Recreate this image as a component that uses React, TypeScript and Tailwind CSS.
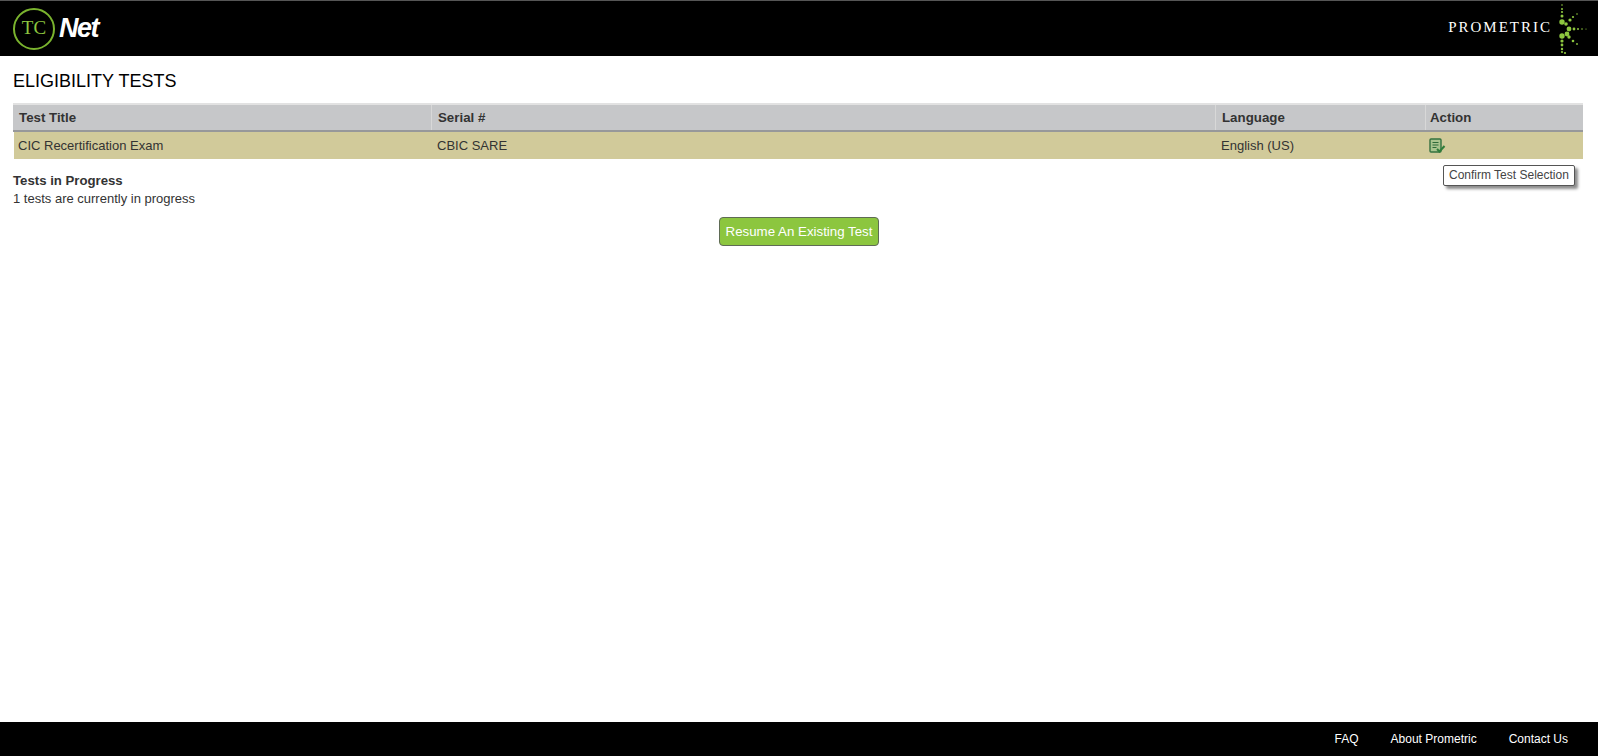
import React from 'react';

const SANS = { fontFamily: '"Liberation Sans", Arial, sans-serif' };

const columns = [
  { label: 'Test Title', value: 'CIC Recertification Exam', width: 'w-[419px]' },
  { label: 'Serial #', value: 'CBIC SARE', width: 'w-[784px]' },
  { label: 'Language', value: 'English (US)', width: 'w-[210px]' },
];

// dots read off the logo, origin at the left edge of the starburst
const dots: [number, number, number][] = [
  [12, 3, 0.8], [12, 7, 1], [12, 10, 1.1], [12, 14, 1.5],
  [12, 20, 2.7], [16, 22, 1.8], [20, 18, 1.6], [23, 15, 1.1], [27, 12, 0.8],
  [19, 27, 2.4], [24, 27, 1.4], [28, 27, 1], [32, 27, 0.8], [36, 27, 0.6],
  [17, 32, 2.4], [12, 34, 2.7], [19, 35, 1.7], [23, 39, 1.3], [27, 42, 0.9],
  [12, 39, 1.6], [12, 43, 1.4], [12, 47, 1.2], [12, 50, 1.1], [15, 51, 1.1],
];

const Starburst = () => (
  <svg width="48" height="54" viewBox="0 0 48 54" className="block">
    {dots.map(([cx, cy, r], i) => (
      <circle key={i} cx={cx} cy={cy} r={r} fill="#8dc63f" />
    ))}
  </svg>
);

const ConfirmIcon = () => (
  <svg width="17" height="16" viewBox="0 0 17 16" className="block">
    <rect x="1" y="1" width="11" height="13" rx="1" fill="#a9c48f" stroke="#33713f" strokeWidth="1.4" />
    <path d="M3.5 4.5h6M3.5 7h6M3.5 9.5h4" stroke="#2f6b3a" strokeWidth="1.2" />
    <path d="M8 11l2.5 2.5L15.5 8" fill="none" stroke="#2f7d3a" strokeWidth="2" />
  </svg>
);

export default function App() {
  return (
    <div className="flex h-[756px] flex-col bg-white text-[13px] text-[#333]" style={SANS}>
      <header className="flex h-[56px] items-center justify-between border-t border-t-[#555] bg-black">
        <div className="flex items-center pl-[13px]">
          <div
            className="flex h-[42px] w-[42px] items-center justify-center rounded-full border-2 border-[#7ab32e] text-[19px] text-[#8dc63f]"
            style={{ fontFamily: '"Liberation Serif", serif' }}
          >
            TC
          </div>
          <span className="ml-[4px] text-[27px] font-bold italic tracking-[-1.5px] text-white">Net</span>
        </div>
        <div className="flex items-center">
          <span
            className="-mr-[2px] pb-[3px] text-[15px] tracking-[2px] text-white"
            style={{ fontFamily: '"Liberation Serif", serif' }}
          >
            PROMETRIC
          </span>
          <Starburst />
        </div>
      </header>

      <main className="relative flex-1 px-[13px]">
        <h1 className="mt-[15px] text-[18px] leading-[20px] text-black">ELIGIBILITY TESTS</h1>

        <div className="mt-[12px] w-[1570px]">
          <div className="flex h-[29px] border-t-2 border-b-2 border-t-[#e2e2e2] border-b-[#97989a] bg-[#c6c7c9] text-[13.3px] font-bold">
            {columns.map((col) => (
              <div key={col.label} className={`${col.width} border-r border-r-[#d8d8d8] pl-[6px] leading-[25px]`}>
                {col.label}
              </div>
            ))}
            <div className="flex-1 pl-[4px] leading-[25px]">Action</div>
          </div>
          <div className="ml-[1px] flex h-[27px] items-center bg-[#d1ca9a]">
            {columns.map((col) => (
              <div key={col.label} className={`${col.width} pl-[4px]`}>
                {col.value}
              </div>
            ))}
            <div className="flex-1 pl-[2px]">
              <ConfirmIcon />
            </div>
          </div>
        </div>

        <div className="mt-[13px] leading-[18px]">
          <div className="text-[13.2px] font-bold">Tests in Progress</div>
          <div>1 tests are currently in progress</div>
        </div>

        <div className="mt-[9px] flex justify-center">
          <button className="h-[29px] rounded-[4px] border border-[#5f6b55] bg-[#8cc63f] px-[6px] pt-[1px] text-[13.3px] text-white">
            Resume An Existing Test
          </button>
        </div>

        <div className="absolute left-[1443px] top-[109px] rounded-[2px] border border-[#555] bg-white px-[5px] py-[2px] text-[12px] leading-[15px] text-[#444] shadow-[3px_3px_3px_rgba(0,0,0,0.45)]">
          Confirm Test Selection
        </div>
      </main>

      <footer className="flex h-[34px] items-center justify-end gap-[32px] bg-black pr-[30px] text-[12px] text-white">
        <span>FAQ</span>
        <span>About Prometric</span>
        <span>Contact Us</span>
      </footer>
    </div>
  );
}
